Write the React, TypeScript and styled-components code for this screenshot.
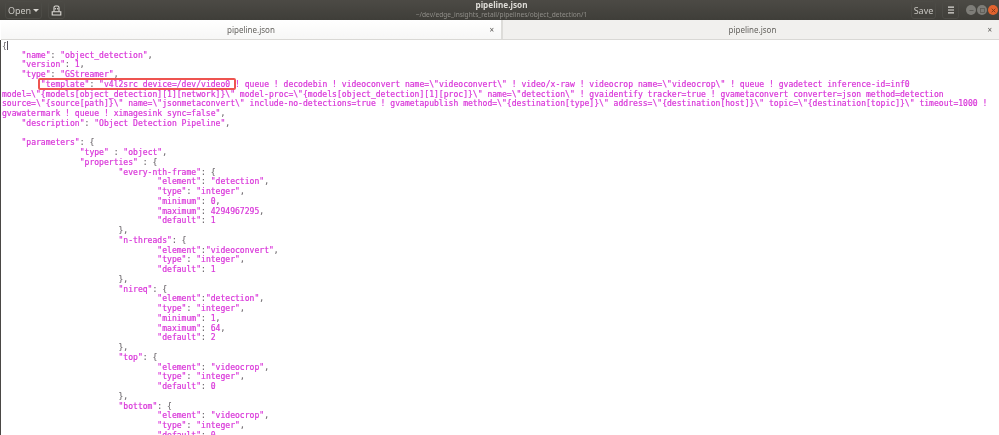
import React from "react";
import styled, { createGlobalStyle } from "styled-components";

const Global = createGlobalStyle`
  html, body { margin: 0; padding: 0; background: #fff; }
  body { width: 999px; height: 435px; overflow: hidden; }
`;

const Window = styled.div`
  width: 999px;
  height: 435px;
  display: flex;
  flex-direction: column;
  overflow: hidden;
  background: #fff;
  filter: blur(0.4px);
`;

const HeaderBar = styled.header`
  height: 20px;
  flex: none;
  display: grid;
  grid-template-columns: 1fr auto 1fr;
  align-items: center;
  padding: 0 1px 0 5px;
  background: linear-gradient(#4c4a45, #3f3e39);
  font-family: "Noto Sans", "Open Sans", sans-serif;
`;

const Group = styled.div<{ $end?: boolean }>`
  display: flex;
  align-items: center;
  justify-content: ${(p) => (p.$end ? "flex-end" : "flex-start")};
  gap: 6px;
`;

const HeaderButton = styled.div<{ $w: number }>`
  width: ${(p) => p.$w}px;
  height: 18px;
  box-sizing: border-box;
  display: flex;
  align-items: center;
  justify-content: center;
  gap: 2px;
  border: 1px solid #4c4b46;
  border-radius: 3px;
  color: #c9c7c2;
  font-size: 9px;
`;

const Caret = styled.span`
  width: 0;
  height: 0;
  border-left: 3px solid transparent;
  border-right: 3px solid transparent;
  border-top: 3px solid #d8d6d1;
`;

const TitleBlock = styled.div`
  display: flex;
  flex-direction: column;
  align-items: center;
  margin-top: -1px;
`;

const Title = styled.div`
  color: #dedcd7;
  font-size: 8.2px;
  font-weight: 700;
  line-height: 10px;
`;

const Subtitle = styled.div`
  color: #8f8d88;
  font-size: 6.6px;
  line-height: 9px;
`;

const WindowControls = styled.div`
  display: flex;
  gap: 1px;
  margin-left: 1px;
`;

const Dot = styled.div<{ $close?: boolean }>`
  width: 10px;
  height: 10px;
  border-radius: 50%;
  background: ${(p) => (p.$close ? "#e2632f" : "#7e7d78")};
  display: flex;
  align-items: center;
  justify-content: center;
`;

const TabBar = styled.nav`
  height: 20px;
  flex: none;
  box-sizing: border-box;
  display: flex;
  margin-left: 1px;
  background: #f1f0ee;
  border-bottom: 1px solid #d9d8d5;
  font-family: "Noto Sans", "Open Sans", sans-serif;
`;

const Tab = styled.div<{ $active?: boolean }>`
  flex: ${(p) => (p.$active ? "0 0 502px" : "1")};
  box-sizing: border-box;
  display: grid;
  grid-template-columns: 1fr auto 1fr;
  align-items: center;
  padding: 0 7px 0 ${(p) => (p.$active ? 7 : 10)}px;
  background: ${(p) => (p.$active ? "linear-gradient(#ffffff, #f7f7f6)" : "#f1f0ee")};
  border-right: ${(p) => (p.$active ? "2px solid #dddcd9" : "none")};
  color: #65635f;
  font-size: 8px;
`;

const TabLabel = styled.span`
  grid-column: 2;
`;

const TabClose = styled.span`
  grid-column: 3;
  justify-self: end;
  color: #5a5855;
  font-size: 8px;
  line-height: 8px;
`;

const Editor = styled.main`
  position: relative;
  flex: 1;
  min-height: 0;
  overflow: hidden;
  box-sizing: border-box;
  padding: 0.8px 0 0 1px;
  background: #fff;
  border-left: 1px solid #4a4845;
  font-family: "DejaVu Sans Mono", monospace;
  font-size: 8.075px;
  line-height: 9.75px;
`;

const Line = styled.div`
  white-space: pre;
  height: 9.75px;
  color: #d935d9;
  -webkit-text-stroke: 0.2px #d935d9;
`;

const Punct = styled.span`
  color: #6a656a;
  -webkit-text-stroke: 0.1px #6a656a;
`;

const Cursor = styled.span`
  display: inline-block;
  width: 0;
  height: 9px;
  vertical-align: -1px;
  margin-left: 0.5px;
  border-left: 1px solid #55505a;
`;

const Highlight = styled.div`
  position: absolute;
  left: 37px;
  top: 38px;
  width: 198px;
  height: 12px;
  box-sizing: border-box;
  border: 2px solid #ee5450;
  border-radius: 2px;
`;

const source = `{
    "name": "object_detection",
    "version": 1,
    "type": "GStreamer",
        "template": "v4l2src device=/dev/video0 ! queue ! decodebin ! videoconvert name=\\"videoconvert\\" ! video/x-raw ! videocrop name=\\"videocrop\\" ! queue ! gvadetect inference-id=inf0
model=\\"{models[object_detection][1][network]}\\" model-proc=\\"{models[object_detection][1][proc]}\\" name=\\"detection\\" ! gvaidentify tracker=true ! gvametaconvert converter=json method=detection
source=\\"{source[path]}\\" name=\\"jsonmetaconvert\\" include-no-detections=true ! gvametapublish method=\\"{destination[type]}\\" address=\\"{destination[host]}\\" topic=\\"{destination[topic]}\\" timeout=1000 !
gvawatermark ! queue ! ximagesink sync=false",
    "description": "Object Detection Pipeline",

    "parameters": {
                "type" : "object",
                "properties" : {
                        "every-nth-frame": {
                                "element": "detection",
                                "type": "integer",
                                "minimum": 0,
                                "maximum": 4294967295,
                                "default": 1
                        },
                        "n-threads": {
                                "element":"videoconvert",
                                "type": "integer",
                                "default": 1
                        },
                        "nireq": {
                                "element":"detection",
                                "type": "integer",
                                "minimum": 1,
                                "maximum": 64,
                                "default": 2
                        },
                        "top": {
                                "element": "videocrop",
                                "type": "integer",
                                "default": 0
                        },
                        "bottom": {
                                "element": "videocrop",
                                "type": "integer",
                                "default": 0`;

const renderLine = (text: string, index: number) => {
  if (index === 0) {
    return (
      <Line key={index}>
        <Punct>{text}</Punct>
        <Cursor />
      </Line>
    );
  }
  if (index >= 5 && index <= 6) return <Line key={index}>{text}</Line>;
  if (index === 7) {
    return (
      <Line key={index}>
        {text.slice(0, -1)}
        <Punct>,</Punct>
      </Line>
    );
  }
  const m = text.match(/^(\s*)("[^"]*"\s*)(:)(.*)$/);
  if (m) {
    const trail = m[4].match(/^(.*?)([,{ ]*)$/);
    return (
      <Line key={index}>
        {m[1]}
        {m[2]}
        <Punct>:</Punct>
        {trail ? trail[1] : m[4]}
        <Punct>{trail ? trail[2] : ""}</Punct>
      </Line>
    );
  }
  return (
    <Line key={index}>
      <Punct>{text || " "}</Punct>
    </Line>
  );
};

export default function App() {
  return (
    <Window>
      <Global />
      <HeaderBar>
        <Group>
          <HeaderButton $w={37}>
            Open <Caret />
          </HeaderButton>
          <HeaderButton $w={17}>
            <svg width="11" height="11" viewBox="0 0 11 11" fill="none" stroke="#dedcd7" strokeWidth="1.1">
              <path d="M3 6.5V2.5a1.5 1.5 0 0 1 1.5-1.5h2A1.5 1.5 0 0 1 8 2.5v4" />
              <path d="M1.2 6.8h8.6V10H1.2z" />
              <circle cx="4.4" cy="3.8" r="0.7" fill="#dedcd7" stroke="none" />
              <circle cx="6.6" cy="3.8" r="0.7" fill="#dedcd7" stroke="none" />
            </svg>
          </HeaderButton>
        </Group>
        <TitleBlock>
          <Title>pipeline.json</Title>
          <Subtitle>~/dev/edge_insights_retail/pipelines/object_detection/1</Subtitle>
        </TitleBlock>
        <Group $end>
          <HeaderButton $w={25}>Save</HeaderButton>
          <HeaderButton $w={17}>
            <svg width="8" height="8" viewBox="0 0 8 8" stroke="#dedcd7" strokeWidth="1.2">
              <path d="M1 1.2h6M1 4h6M1 6.8h6" />
            </svg>
          </HeaderButton>
          <WindowControls>
            <Dot>
              <svg width="5" height="5" viewBox="0 0 5 5" stroke="#5c5b56" strokeWidth="1">
                <path d="M0.5 2.5h4" />
              </svg>
            </Dot>
            <Dot>
              <svg width="5" height="5" viewBox="0 0 5 5" fill="none" stroke="#5c5b56" strokeWidth="0.8">
                <rect x="0.5" y="0.5" width="4" height="4" />
              </svg>
            </Dot>
            <Dot $close>
              <svg width="5" height="5" viewBox="0 0 5 5" stroke="#7a3518" strokeWidth="0.9">
                <path d="M0.7 0.7l3.6 3.6M4.3 0.7L0.7 4.3" />
              </svg>
            </Dot>
          </WindowControls>
        </Group>
      </HeaderBar>
      <TabBar>
        <Tab $active>
          <TabLabel>pipeline.json</TabLabel>
          <TabClose>×</TabClose>
        </Tab>
        <Tab>
          <TabLabel>pipeline.json</TabLabel>
          <TabClose>×</TabClose>
        </Tab>
      </TabBar>
      <Editor>
        {source.split("\n").map(renderLine)}
        <Highlight />
      </Editor>
    </Window>
  );
}
